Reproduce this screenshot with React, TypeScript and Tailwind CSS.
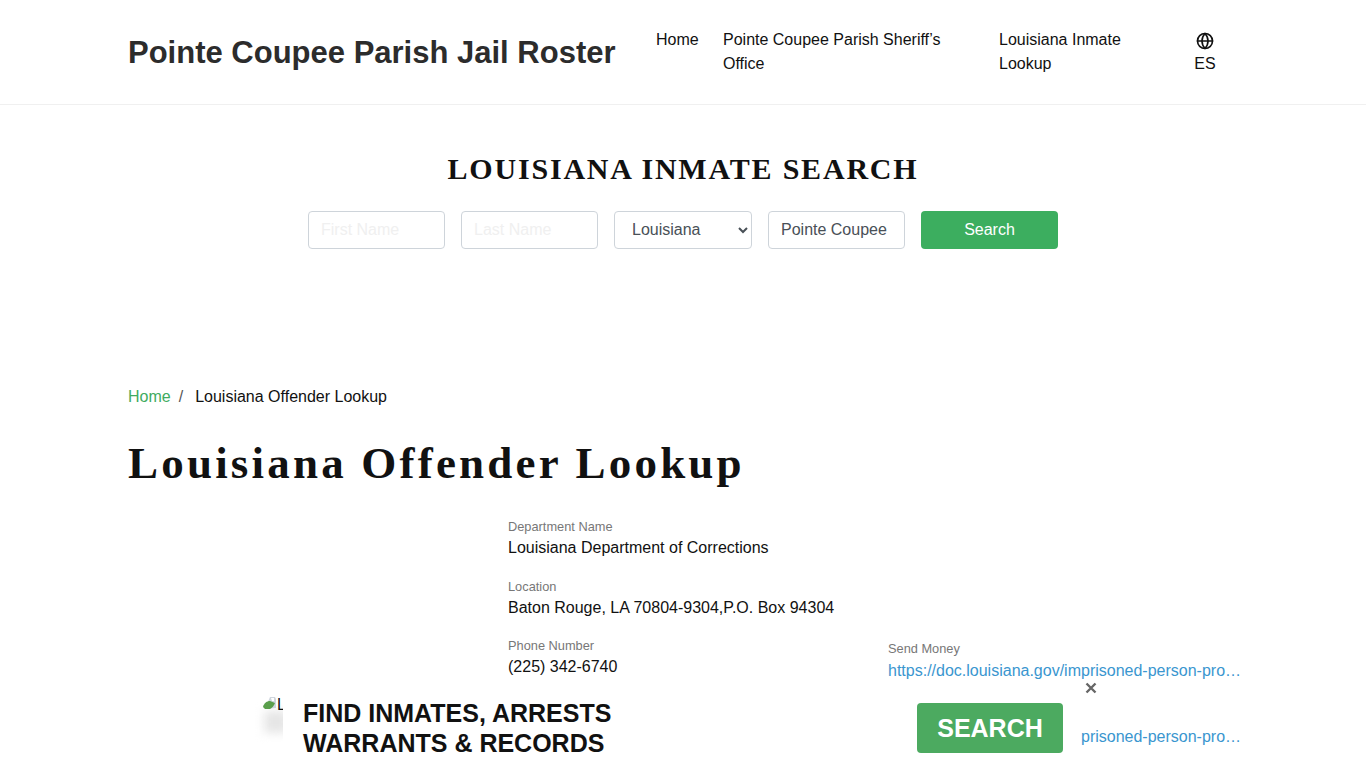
import { Globe } from "lucide-react";

const navLink = "text-base leading-6 text-[#111]";
const field =
  "h-[38px] w-[137px] rounded border border-[#ced4da] bg-white px-3 text-base text-[#495057] placeholder:text-[#f0f0f0] outline-none";

function Info({ label, value }: { label: string; value: string }) {
  return (
    <div>
      <div className="text-[12.8px] leading-[19px] text-[#777]">{label}</div>
      <div className="text-base leading-6 text-[#111]">{value}</div>
    </div>
  );
}

function LinkInfo({ label, value }: { label: string; value: string }) {
  return (
    <div className="w-[354px] flex-none">
      <div className="text-[12.8px] leading-[21px] text-[#777]">{label}</div>
      <a className="block truncate text-base leading-6 text-[#3a96cf]">{value}</a>
    </div>
  );
}

export default function App() {
  return (
    <div className="relative h-screen overflow-hidden bg-white font-['Liberation_Sans',Arial,sans-serif]">
      <header className="flex h-[105px] border-b border-[#f0f0f0] pl-[128px] pt-[28px]">
        <h1 className="w-[528px] text-[31px] font-bold leading-[50px] text-[#2c2c2c]">
          Pointe Coupee Parish Jail Roster
        </h1>
        <a className={`${navLink} w-[67px]`}>Home</a>
        <a className={`${navLink} w-[276px]`}>
          Pointe Coupee Parish Sheriff’s
          <br />
          Office
        </a>
        <a className={`${navLink} w-[194px]`}>
          Louisiana Inmate
          <br />
          Lookup
        </a>
        <a className={`${navLink} flex w-[24px] flex-col items-center`}>
          <Globe className="mt-[4px] mb-[2px] h-[18px] w-[18px]" strokeWidth={2.2} />
          <span>ES</span>
        </a>
      </header>

      <section className="flex flex-col items-center pt-[46px]">
        <h2 className="font-['Liberation_Serif',serif] text-[30px] font-bold leading-9 tracking-[1.8px] text-[#111]">
          LOUISIANA INMATE SEARCH
        </h2>
        <form className="mt-[24px] flex gap-4">
          <input className={field} placeholder="First Name" />
          <input className={field} placeholder="Last Name" />
          <select className={`${field} w-[138px] pb-[2px] pl-[13px]`} defaultValue="Louisiana">
            <option>Louisiana</option>
          </select>
          <input className={field} defaultValue="Pointe Coupee" />
          <button
            type="button"
            className="h-[38px] w-[137px] rounded bg-[#3cae5f] text-base text-white"
          >
            Search
          </button>
        </form>
      </section>

      <main className="px-[128px] pt-[136px]">
        <nav className="flex text-base leading-6">
          <a className="text-[#40ab60]">Home</a>
          <span className="ml-2 text-[#555]">/</span>
          <span className="ml-[12px] text-[#111]">Louisiana Offender Lookup</span>
        </nav>
        <h1 className="mt-[28px] font-['Liberation_Serif',serif] text-[45px] font-bold leading-[53px] tracking-[3.2px] text-[#111]">
          Louisiana Offender Lookup
        </h1>
        <div className="mt-[27px] flex pl-[380px]">
          <div className="flex w-[380px] flex-none flex-col gap-[16.5px]">
            <Info label="Department Name" value="Louisiana Department of Corrections" />
            <Info label="Location" value="Baton Rouge, LA 70804-9304,P.O. Box 94304" />
            <Info label="Phone Number" value="(225) 342-6740" />
          </div>
          <div className="flex flex-col gap-[21px] pt-[121px]">
            <LinkInfo
              label="Send Money"
              value="https://doc.louisiana.gov/imprisoned-person-programs-resources/"
            />
            <LinkInfo
              label="Visit"
              value="https://doc.louisiana.gov/imprisoned-person-programs-resources/"
            />
          </div>
        </div>
      </main>

      <div className="absolute bottom-0 left-[283px] h-[70px] w-[798px] bg-white pl-[20px]">
        <div className="flex items-start">
          <p className="w-[614px] text-[25px] font-bold leading-[30px] text-[#111]">
            FIND INMATES, ARRESTS
            <br />
            WARRANTS &amp; RECORDS
          </p>
          <button
            type="button"
            className="mt-[5px] h-[50px] w-[146px] rounded bg-[#4caa60] pt-[2px] text-[25px] font-bold text-white"
          >
            SEARCH
          </button>
        </div>
      </div>

      <div className="absolute left-[250px] top-[685px] h-[60px] w-[33px] overflow-hidden">
        <div className="absolute left-[14px] top-[26px] h-[22px] w-[24px] bg-[#e6e6e6] blur-[5px]" />
        <svg viewBox="0 0 16 16" className="absolute left-[12px] top-[11px] h-4 w-4">
          <path d="M8 1 L13 1 L14 3 L14 12 L3 13Z" fill="#cfd6de" />
          <path d="M1 11 C2 7 5 5 8 5 L13 7 C12 10 10 12 8 13 L3 13Z" fill="#5a9e4b" />
          <path d="M9 2 L12 2 L12 5 L10 5Z" fill="#ffffff" />
        </svg>
        <span className="absolute left-[27px] top-[8px] text-base leading-6 text-[#111]">L</span>
      </div>

      <button
        type="button"
        className="absolute left-[1084px] top-[681px] flex h-[14px] w-[14px] items-center justify-center text-[#666]"
      >
        <svg viewBox="0 0 12 12" className="h-[12px] w-[12px]" stroke="currentColor" strokeWidth="2.4">
          <path d="M1.5 1.5 L10.5 10.5 M10.5 1.5 L1.5 10.5" />
        </svg>
      </button>
    </div>
  );
}
